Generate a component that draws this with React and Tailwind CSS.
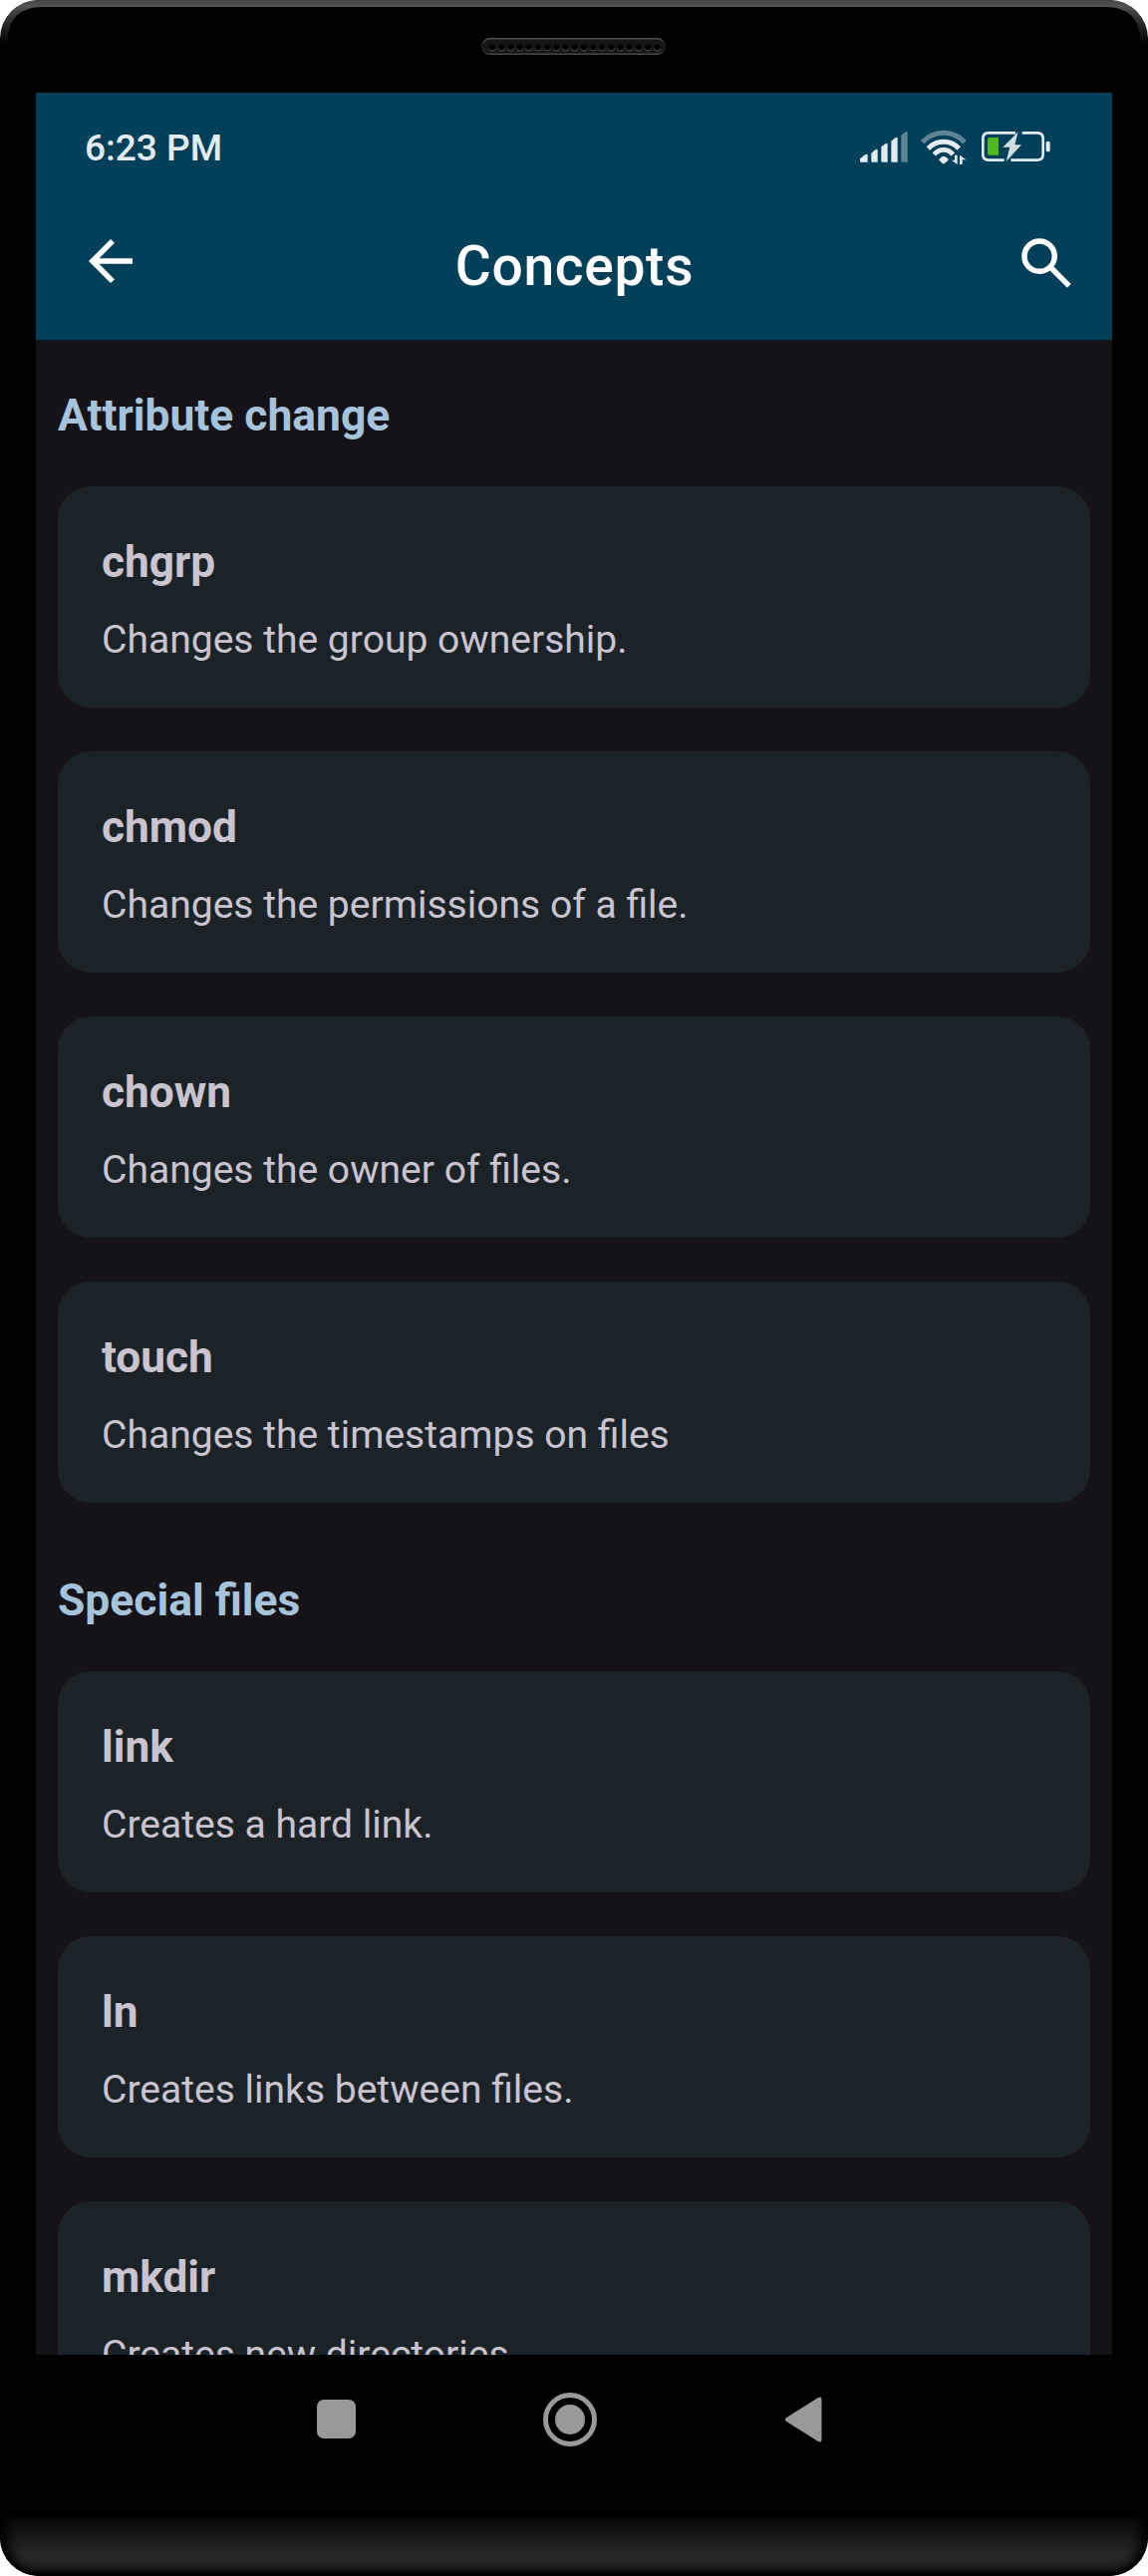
const sections = [
  {
    title: 'Attribute change',
    items: [
      ['chgrp', 'Changes the group ownership.'],
      ['chmod', 'Changes the permissions of a file.'],
      ['chown', 'Changes the owner of files.'],
      ['touch', 'Changes the timestamps on files'],
    ],
  },
  {
    title: 'Special files',
    items: [
      ['link', 'Creates a hard link.'],
      ['ln', 'Creates links between files.'],
      ['mkdir', 'Creates new directories.'],
    ],
  },
];

function SignalIcon() {
  return (
    <svg className="h-9 w-[50px]" viewBox="66 90 150 108" fill="#e5ecf1">
      <path d="M72 188 Q69 188 69 185 V178 L82 167 Q92 161 92 168 V188 Z" />
      <path d="M106 188 Q103 188 103 185 V161 L113 152 Q122 146 122 152 V188 Z" />
      <path d="M136 188 Q133 188 133 185 V142 L143 134 Q152 128 152 134 V188 Z" />
      <path d="M166 188 Q163 188 163 185 V125 L173 116 Q182 110 182 116 V188 Z" />
      <path d="M196 188 Q193 188 193 185 V107 L203 99 Q212 93 212 99 V188 Z" fill="#5f8496" />
    </svg>
  );
}

function WifiIcon() {
  return (
    <svg className="h-9 w-[50px]" viewBox="246 90 150 108" fill="none">
      <path d="M257 128 Q284 100 320.500 100 T384 128" stroke="#5f8496" strokeWidth="15" />
      <path d="M274 147 Q294 127 320.500 127 T367 147" stroke="#e5ecf1" strokeWidth="15" />
      <path d="M292 165 Q304 151 320.500 151 T349 165" stroke="#e5ecf1" strokeWidth="14" />
      <path d="M306 181 Q320.500 160 336 181 L325 191 Q320.500 194 316 191 Z" fill="#e5ecf1" />
      <path d="M354 167 H362 V195 L345 182 H354 Z M377 195 H369 V167 L388 181 H377 Z" fill="#e5ecf1" />
    </svg>
  );
}

function BatteryIcon() {
  return (
    <svg className="h-9 w-[71px]" viewBox="432 90 213 108" fill="none">
      <path d="M537 100 H456 Q439 100 439 117 V165 Q439 182 456 182 H503" stroke="#e5ecf1" strokeWidth="8" />
      <path d="M557 100 H603 Q620 100 620 117 V165 Q620 182 603 182 H523" stroke="#e5ecf1" strokeWidth="8" />
      <rect x="629" y="125" width="12" height="32" rx="5" fill="#e5ecf1" />
      <path d="M460 114 H486 V167 H460 Q453 167 453 160 V121 Q453 114 460 114 Z" fill="#4db91b" />
      <path d="M545 97 L499 143 H520 L509 186 L555 136 H535 Z" fill="#d2dde3" />
    </svg>
  );
}

function Speaker() {
  return (
    <svg className="h-[17px] w-[185px]" viewBox="0 0 185 17">
      <defs>
        <linearGradient id="rim" x1="0" y1="0" x2="0" y2="1">
          <stop offset="0" stopColor="#505050" />
          <stop offset="0.4" stopColor="#1c1c1c" />
          <stop offset="0.75" stopColor="#222" />
          <stop offset="1" stopColor="#484848" />
        </linearGradient>
        <linearGradient id="hole" x1="0" y1="0" x2="0" y2="1">
          <stop offset="0.45" stopColor="#161616" />
          <stop offset="1" stopColor="#666" />
        </linearGradient>
      </defs>
      <rect x="0.75" y="0.75" width="183.500" height="15.500" rx="7.750" fill="#161616" stroke="url(#rim)" strokeWidth="1.500" />
      {Array.from({ length: 19 }, (_, i) => (
        <circle key={i} cx={11 + i * 9.19} cy="9.500" r="3.500" fill="#000" stroke="url(#hole)" strokeWidth="0.900" />
      ))}
    </svg>
  );
}

function BezelHighlight() {
  return (
    <svg className="absolute left-0 top-0 h-12 w-full" viewBox="0 0 1152 48" fill="none">
      <defs>
        <linearGradient id="bezel" gradientUnits="userSpaceOnUse" x1="0" y1="0" x2="0" y2="44">
          <stop offset="0" stopColor="#444" />
          <stop offset="0.15" stopColor="#525252" />
          <stop offset="0.45" stopColor="#303030" />
          <stop offset="1" stopColor="#000" />
        </linearGradient>
      </defs>
      <path d="M4 44 V42 Q5 3.500 42 3.500 H1110 Q1147 3.500 1148 42 V44" stroke="url(#bezel)" strokeWidth="7" />
    </svg>
  );
}

function Card({ name, text }) {
  return (
    <div className="h-[222px] shrink-0 rounded-[33px] bg-[#1b2329] px-11 pt-11">
      <h3 className="text-[44.2px] font-bold leading-[64px]">{name}</h3>
      <p className="mt-5 whitespace-nowrap text-[39.05px] leading-[52px]">{text}</p>
    </div>
  );
}

export default function App() {
  return (
    <div className="bg-white font-[Roboto,sans-serif]">
      <div className="relative flex h-[2585px] w-[1152px] flex-col overflow-hidden rounded-[39px] bg-black">
        <BezelHighlight />
        <div className="flex h-[93px] shrink-0 justify-center pt-[38px] pr-[1px]">
          <Speaker />
        </div>
        <div className="mx-9 flex h-[2270px] shrink-0 flex-col overflow-hidden bg-[#151218]">
          <header className="flex h-[248px] shrink-0 flex-col bg-[#024059]">
            <div className="flex h-[110px] items-center justify-between pl-[49px] pr-[61px]">
              <span className="pt-0.5 text-[37px] font-medium leading-[44px] text-[#e5ecf1]">6:23 PM</span>
              <div className="flex items-center">
                <SignalIcon />
                <div className="ml-2.5 flex"><WifiIcon /></div>
                <div className="ml-3 flex"><BatteryIcon /></div>
              </div>
            </div>
            <div className="flex h-[138px] items-start justify-between pl-[42px] pr-[33px] pt-[26px] text-white">
              <svg className="size-[66px]" viewBox="0 -960 960 960" fill="currentColor">
                <path d="m313-440 224 224-57 56-320-320 320-320 57 56-224 224h487v80H313Z" />
              </svg>
              <h1 className="pr-[8px] pt-[5px] text-[55.2px] font-medium leading-[66px] tracking-[0.65px]">Concepts</h1>
              <svg className="mt-0.5 size-[66px]" viewBox="0 -960 960 960" fill="currentColor">
                <path d="M784-120 532-372q-30 24-69 38t-83 14q-109 0-184.500-75.500T120-580q0-109 75.500-184.500T380-840q109 0 184.500 75.500T640-580q0 44-14 83t-38 69l252 252-56 56ZM380-400q75 0 127.500-52.500T560-580q0-75-52.500-127.500T380-760q-75 0-127.500 52.500T200-580q0 75 52.500 127.500T380-400Z" />
              </svg>
            </div>
          </header>
          <main className="flex flex-col px-[22px] text-[#cac4d0]">
            {sections.map((section) => (
              <section key={section.title} className="mb-[22px] flex shrink-0 flex-col">
                <h2 className="h-[147px] pt-[50px] text-[44.4px] font-bold leading-[52px] text-[#a5c3da]">{section.title}</h2>
                <div className="flex flex-col gap-11">
                  {section.items.map(([name, text]) => (
                    <Card key={name} name={name} text={text} />
                  ))}
                </div>
              </section>
            ))}
          </main>
        </div>
        <nav className="flex h-[164px] shrink-0 items-start pl-[318px] pt-[38px]">
          <div className="mt-[7px] size-[39px] rounded-[7px] bg-[#999]" />
          <div className="ml-[188px] flex size-[54px] items-center justify-center rounded-full border-[5px] border-[#999]">
            <div className="size-[30px] rounded-full bg-[#999]" />
          </div>
          <svg className="ml-[188px] mt-1 h-[46px] w-[38px]" viewBox="0 0 38 46">
            <path d="M3 23 L35.500 2.500 V43.500 Z" fill="#999" stroke="#999" strokeWidth="4" strokeLinejoin="round" />
          </svg>
        </nav>
        <div className="h-[58px] shrink-0 rounded-b-[39px] bg-[linear-gradient(180deg,#0b0b0b_0%,#161616_28%,#262626_60%,#262626_75%,#161616_90%,#000_100%)] shadow-[inset_14px_0_12px_-6px_#000,inset_-14px_0_12px_-6px_#000,inset_0_-5px_5px_-3px_#000]" />
      </div>
    </div>
  );
}
